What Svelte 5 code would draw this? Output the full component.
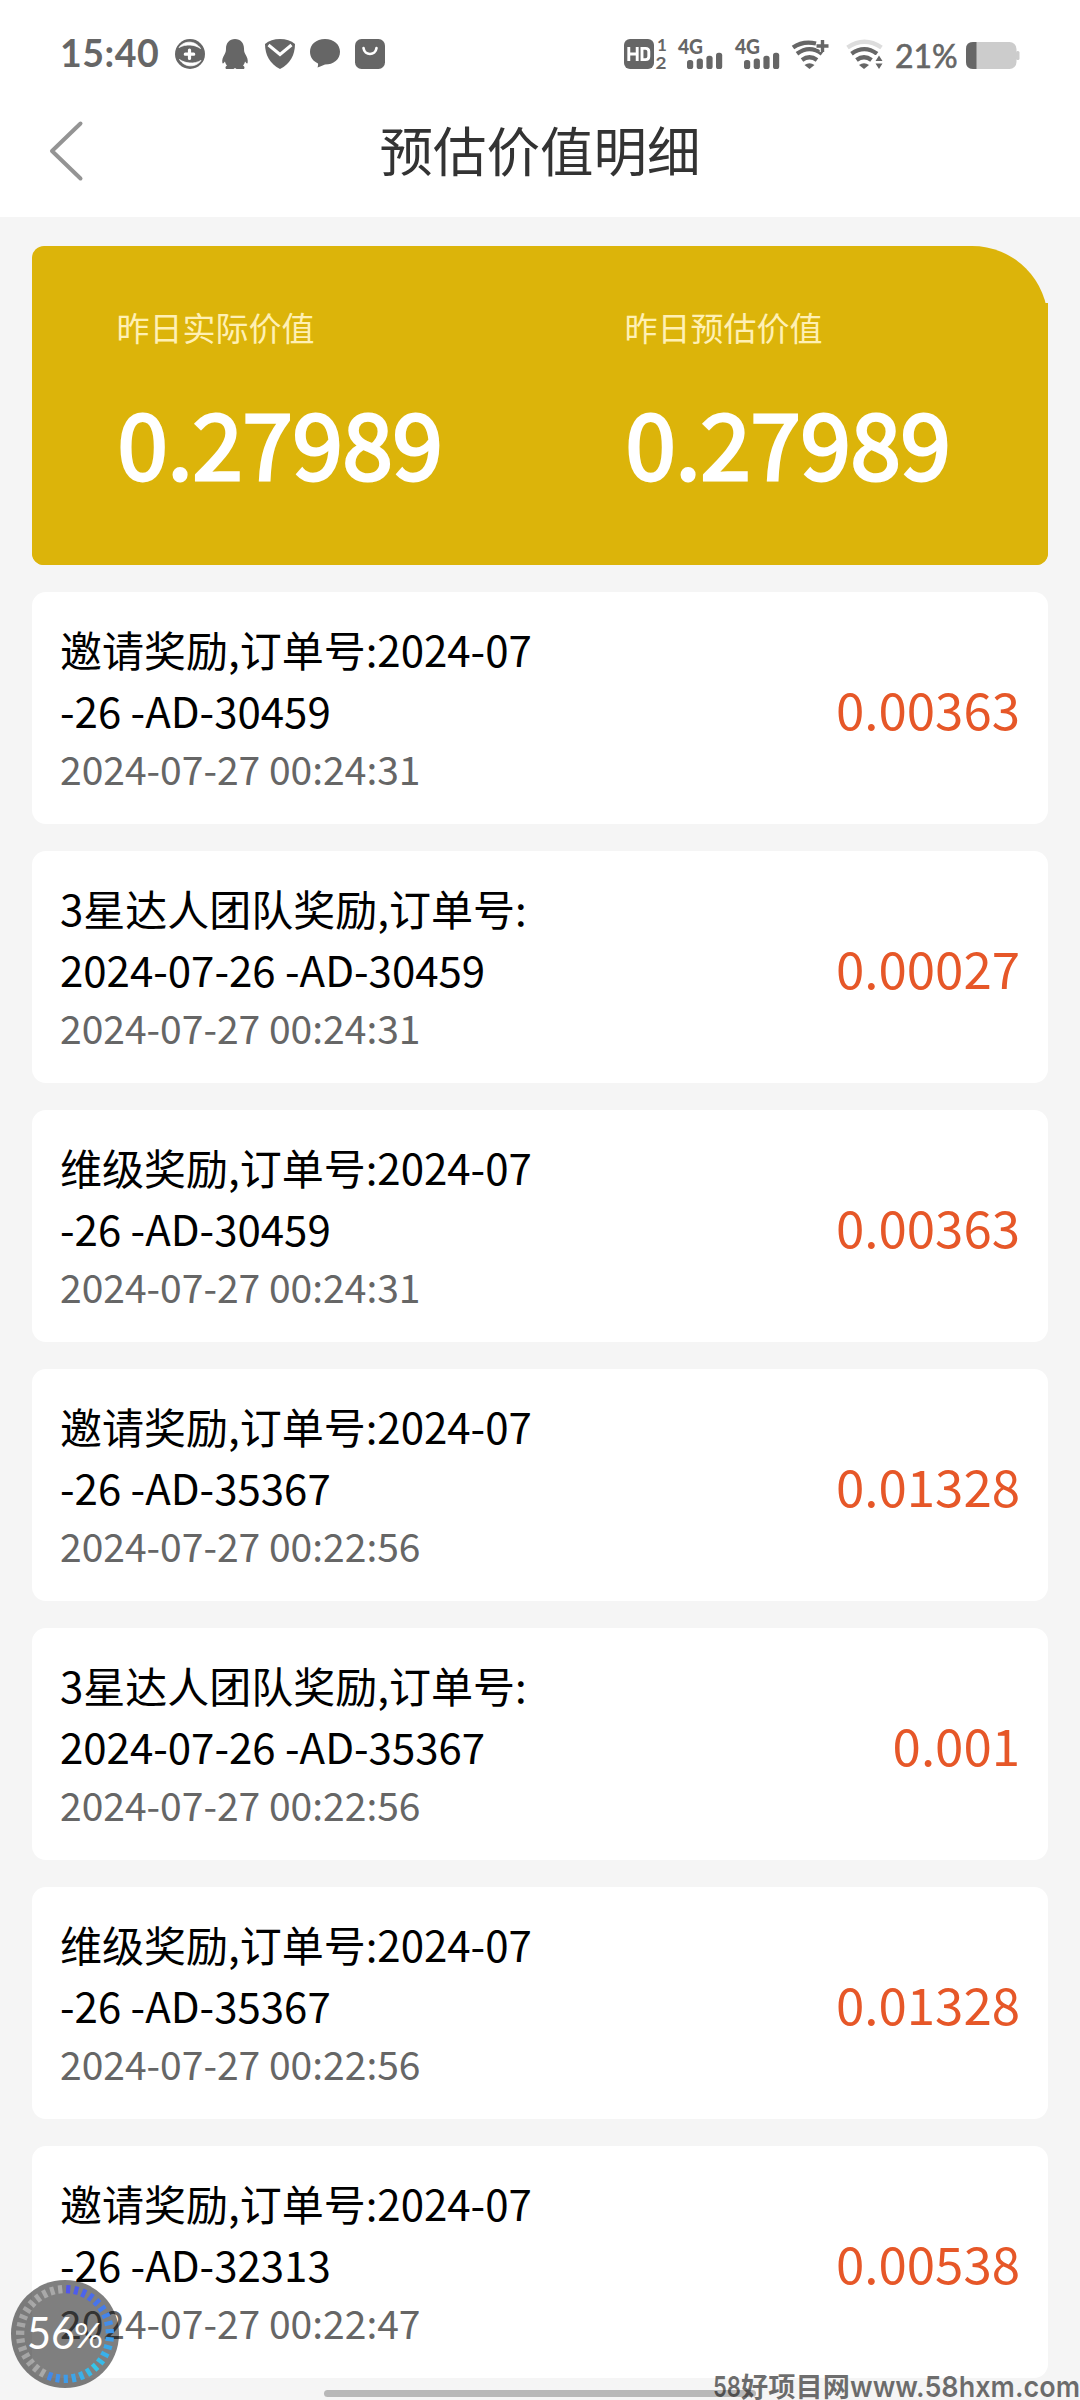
<script>
  const summary = [
    { label: '昨日实际价值', value: '0.27989' },
    { label: '昨日预估价值', value: '0.27989' }
  ];

  const records = [
    { lines: ['邀请奖励,订单号:2024-07', '-26 -AD-30459'], time: '2024-07-27 00:24:31', amount: '0.00363' },
    { lines: ['3星达人团队奖励,订单号:', '2024-07-26 -AD-30459'], time: '2024-07-27 00:24:31', amount: '0.00027' },
    { lines: ['维级奖励,订单号:2024-07', '-26 -AD-30459'], time: '2024-07-27 00:24:31', amount: '0.00363' },
    { lines: ['邀请奖励,订单号:2024-07', '-26 -AD-35367'], time: '2024-07-27 00:22:56', amount: '0.01328' },
    { lines: ['3星达人团队奖励,订单号:', '2024-07-26 -AD-35367'], time: '2024-07-27 00:22:56', amount: '0.001' },
    { lines: ['维级奖励,订单号:2024-07', '-26 -AD-35367'], time: '2024-07-27 00:22:56', amount: '0.01328' },
    { lines: ['邀请奖励,订单号:2024-07', '-26 -AD-32313'], time: '2024-07-27 00:22:47', amount: '0.00538' }
  ];

  const TICKS = 35;
  const FILLED = 20;

  function tickColor(i) {
    if (i >= FILLED) return 'rgba(255, 255, 255, 0.33)';
    // blue -> cyan until two thirds, then slightly back to blue
    const t = i <= 13 ? i / 13 : 1 - (i - 13) / 12;
    return `hsl(${238 - t * 46}, 80%, ${62 - t * 6}%)`;
  }

  const ticks = Array.from({ length: TICKS }, (_, i) => ({
    angle: 4 + (i * 360) / TICKS,
    color: tickColor(i)
  }));
</script>

<div class="screen">
  <div class="status-bar">
    <span class="clock">15:40</span>
    <div class="notifications">
      <svg width="30" height="30" viewBox="0 0 30 30">
        <circle cx="15" cy="15" r="15" fill="#666" />
        <path d="M4 8.500C9 1.500 20 1 25.500 9.500C20 5.500 11 4.500 4 8.500Z" fill="#fff" stroke="#fff" stroke-width="0.800" />
        <path d="M26 21.500C21 28.500 10 29 4.500 20.500C10 24.500 19 25.500 26 21.500Z" fill="#fff" stroke="#fff" stroke-width="0.800" />
        <path d="M14.500 11V19.500M10.300 15.200H18.700" stroke="#fff" stroke-width="3.200" stroke-linecap="round" />
      </svg>
      <svg width="30" height="30" viewBox="0 0 30 30">
        <path d="M15 0C20.500 0 24 4 24 9.500C24 12 24.300 13.500 25.500 15.500C27 18 28.300 21 27.600 24C27 25.200 25.800 23.500 25 22.500C24.700 24.200 24 25.500 23 26.500C24.500 27.300 25 28.500 24 30H16.500L15 29L13.500 30H6C5 28.500 5.500 27.300 7 26.500C6 25.500 5.300 24.200 5 22.500C4.200 23.500 3 25.200 2.400 24C1.700 21 3 18 4.500 15.500C5.700 13.500 6 12 6 9.500C6 4 9.500 0 15 0Z" fill="#666" />
      </svg>
      <svg width="30" height="30" viewBox="0 0 30 30">
        <path d="M0 5C4 1.500 9 0 15 0C21 0 26 1.500 30 5C30 16 25 25 15 30C5 25 0 16 0 5Z" fill="#666" />
        <path d="M3.500 6L15 15.500L26.500 6" stroke="#fff" stroke-width="3" fill="none" />
      </svg>
      <svg width="30" height="30" viewBox="0 0 30 30">
        <path d="M15 0C24 0 30 5.500 30 12.800C30 20.500 23.500 25.600 15 25.600C12.500 26.500 10.500 28 7.500 28.500C8 27 8.200 26 8 24.500C3.500 22.500 0 18.500 0 12.800C0 5.500 6 0 15 0Z" fill="#666" />
      </svg>
      <svg width="30" height="30" viewBox="0 0 30 30">
        <rect width="30" height="30" rx="6.500" fill="#666" />
        <path d="M8.500 9C9.500 17 20.500 17 21.500 9" stroke="#fff" stroke-width="2.600" fill="none" stroke-linecap="round" />
      </svg>
    </div>
    <div class="indicators">
      <svg class="hd" width="43" height="30" viewBox="0 0 43 30">
        <rect width="30" height="30" rx="6" fill="#666" />
        <path d="M4.800 8V22M13.200 8V22M4.800 15H13.200" stroke="#fff" stroke-width="2.900" fill="none" />
        <path d="M16.500 9.400H21.500Q24.800 9.400 24.800 12.500V17.500Q24.800 20.600 21.500 20.600H18V9.400" stroke="#fff" stroke-width="2.900" fill="none" />
        <text x="33" y="12" class="sim">1</text>
        <text x="31.500" y="29.500" class="sim" textLength="11" lengthAdjust="spacingAndGlyphs">2</text>
      </svg>
      {#each [1, 2] as sim (sim)}
        <svg class="signal" width="45" height="30" viewBox="0 0 45 30">
          <text x="0" y="14.500" class="net" textLength="25" lengthAdjust="spacingAndGlyphs">4G</text>
          <rect x="9" y="21" width="6.200" height="9" rx="2.600" fill="#666" />
          <rect x="18.700" y="19.500" width="6.200" height="10.500" rx="2.600" fill="#666" />
          <rect x="28.400" y="16.700" width="6.200" height="13.300" rx="2.600" fill="#666" />
          <rect x="38" y="13.700" width="6.200" height="16.300" rx="2.600" fill="#666" />
        </svg>
      {/each}
      <svg class="wifi" width="37" height="30" viewBox="0 0 37 30">
        <g fill="none" stroke="#666" stroke-width="4.300">
          <path d="M1 8.500Q11 1.500 24 4.500" />
          <path d="M5 14.800Q17.500 5.500 30 14.800" />
          <path d="M10 21Q17.500 15.500 25 21" />
        </g>
        <path d="M12.500 26Q17.500 22.500 22.500 26L17.500 30Z" fill="#666" />
        <path d="M30.500 1V13M24.500 7H36.500" stroke="#fff" stroke-width="5.500" />
        <path d="M30.500 1V13M24.500 7H36.500" stroke="#666" stroke-width="3.400" />
      </svg>
      <svg class="wifi second" width="37" height="30" viewBox="0 0 37 30">
        <g fill="none" stroke="#666" stroke-width="4.300">
          <path d="M1.500 8.500Q18.500 -3 35.500 8.500" stroke="#ddd" />
          <path d="M5.500 14.800Q18.500 5.500 31 14.800" />
          <path d="M10.500 21Q18 15.500 25.500 21" />
        </g>
        <path d="M13 26Q18 22.500 23 26L18 30Z" fill="#666" />
        <path d="M28.500 16H37V30H28.500Z" fill="#fff" />
        <path d="M29.500 22L33 16.500L36.500 22ZM29.500 24.500H36.500L33 30Z" fill="#666" />
      </svg>
      <span class="percent">21%</span>
      <svg class="battery" width="54" height="27" viewBox="0 0 54 27">
        <rect width="50.500" height="27" rx="7" fill="#ccc" />
        <rect x="50" y="9" width="3.500" height="9" rx="1.500" fill="#ccc" />
        <path d="M7 0H10.500V27H7Q0 27 0 20V7Q0 0 7 0Z" fill="#666" />
      </svg>
    </div>
  </div>

  <header class="nav">
    <button class="back" aria-label="返回">
      <svg width="36" height="62" viewBox="0 0 36 62">
        <path d="M32.500 3.500L4 31L32.500 58.500" fill="none" stroke="#949494" stroke-width="4" stroke-linecap="round" stroke-linejoin="round" />
      </svg>
    </button>
    <h1>预估价值明细</h1>
  </header>

  <main>
    <section class="summary">
      <div class="summary-body">
        {#each summary as item (item.label)}
          <div class="summary-item">
            <div class="summary-label">{item.label}</div>
            <div class="summary-value">{item.value}</div>
          </div>
        {/each}
      </div>
    </section>

    {#each records as record}
      <article class="record">
        <div class="info">
          {#each record.lines as line}
            <div class="title">{line}</div>
          {/each}
          <div class="time">{record.time}</div>
        </div>
        <div class="amount">{record.amount}</div>
      </article>
    {/each}
  </main>

  <div class="home-bar"></div>

  <svg class="meter" width="108" height="108" viewBox="-54 -54 108 108">
    <circle r="54" fill="rgba(0, 0, 0, 0.5)" />
    {#each ticks as tick}
      <rect x="-2" y="-49" width="4.200" height="8.300" fill={tick.color} transform="rotate({tick.angle})" />
    {/each}
    <text x="-38" y="15" font-size="44" textLength="48" lengthAdjust="spacingAndGlyphs">56</text>
    <text x="9" y="14" font-size="35" textLength="29" lengthAdjust="spacingAndGlyphs">%</text>
  </svg>

  <svg class="watermark" width="368" height="28" viewBox="0 0 368 28">
    <text x="0" y="24" class="latin" textLength="28" lengthAdjust="spacingAndGlyphs">58</text>
    <text x="28" y="24" class="cjk" textLength="109" lengthAdjust="spacingAndGlyphs">好项目网</text>
    <text x="137" y="24" class="latin" textLength="230" lengthAdjust="spacingAndGlyphs">www.58hxm.com</text>
  </svg>
</div>

<style>
  :global(body) {
    margin: 0;
    background: #f5f5f5;
  }

  .screen {
    position: relative;
    width: 1080px;
    height: 2400px;
    overflow: hidden;
    background: #f5f5f5;
    font-family: "Noto Sans CJK SC", sans-serif;
  }

  svg {
    overflow: visible;
  }

  .status-bar {
    display: flex;
    box-sizing: border-box;
    height: 90px;
    padding: 0 60px;
    background: #fff;
    color: #666;
    font-family: Lato, sans-serif;
  }

  .clock {
    width: 115px;
    padding-top: 30px;
    font-size: 37.5px;
    line-height: 45px;
    font-weight: 700;
    letter-spacing: 0.5px;
    white-space: nowrap;
  }

  .notifications {
    display: flex;
    gap: 15px;
    padding-top: 39px;
  }

  .indicators {
    display: flex;
    align-items: flex-start;
    margin-left: auto;
    padding-top: 39px;
  }

  .hd {
    margin-right: 11px;
  }

  .signal {
    margin-right: 12px;
  }

  .wifi {
    margin-right: 17px;
  }

  .wifi.second {
    margin-right: 12px;
  }

  .percent {
    width: 71px;
    margin-top: -3px;
    font-size: 32px;
    line-height: 39px;
    -webkit-text-stroke: 0.6px #666;
  }

  .battery {
    margin-top: 3px;
  }

  .sim {
    fill: #666;
    font: 700 17px Lato, sans-serif;
  }

  .net {
    fill: #666;
    font: 900 20px Lato, sans-serif;
  }

  .nav {
    display: grid;
    grid-template-columns: 150px 1fr 150px;
    align-items: start;
    box-sizing: border-box;
    height: 127px;
    background: #fff;
  }

  .back {
    display: flex;
    margin-top: 30px;
    padding: 0 0 0 48px;
    border: none;
    background: none;
  }

  .nav h1 {
    margin: 20px 0 0;
    text-align: center;
    font-size: 53.5px;
    line-height: 78px;
    font-weight: 400;
    color: #333;
  }

  main {
    display: flex;
    flex-direction: column;
    gap: 27px;
    padding: 29px 32px;
  }

  .summary {
    box-sizing: border-box;
    height: 319px;
    padding-top: 57px;
    border-radius: 12px 76px 12px 12px;
    background: #dcb40a;
  }

  .summary-body {
    display: grid;
    grid-template-columns: 1fr 1fr;
    height: 262px;
    border-radius: 0 0 12px 12px;
    background: #dcb40a;
  }

  .summary-item {
    padding-left: 84.5px;
  }

  .summary-label {
    font-size: 33px;
    line-height: 48px;
    color: #fff0b4;
  }

  .summary-value {
    margin-top: 25px;
    padding-left: 1px;
    font-size: 90.5px;
    line-height: 130px;
    letter-spacing: -0.2px;
    color: #fff;
    -webkit-text-stroke: 3px #fff;
  }

  .record {
    display: flex;
    align-items: center;
    justify-content: space-between;
    box-sizing: border-box;
    height: 232px;
    padding: 0 28px 2px;
    border-radius: 14px;
    background: #fff;
  }

  .title {
    font-size: 42px;
    line-height: 61px;
    color: #000;
    white-space: pre;
  }

  .time {
    font-size: 39px;
    line-height: 56px;
    color: #666;
  }

  .amount {
    padding-top: 2px;
    font-size: 51px;
    line-height: 74px;
    color: #e65728;
  }

  .home-bar {
    position: absolute;
    left: 324px;
    bottom: 3px;
    width: 432px;
    height: 7px;
    border-radius: 4px;
    background: #b8b8b8;
  }

  .meter {
    position: absolute;
    left: 11px;
    bottom: 12px;
  }

  .meter text {
    fill: #fff;
    font-family: Lato, sans-serif;
  }

  .watermark {
    position: absolute;
    right: -1px;
    bottom: -1px;
  }

  .watermark text {
    fill: rgba(0, 0, 0, 0.56);
    font-weight: 700;
  }

  .watermark .latin {
    font-family: Inter, sans-serif;
    font-size: 29px;
    font-weight: 600;
  }

  .watermark .cjk {
    font-family: "Noto Sans CJK SC", sans-serif;
    font-size: 27px;
  }
</style>
